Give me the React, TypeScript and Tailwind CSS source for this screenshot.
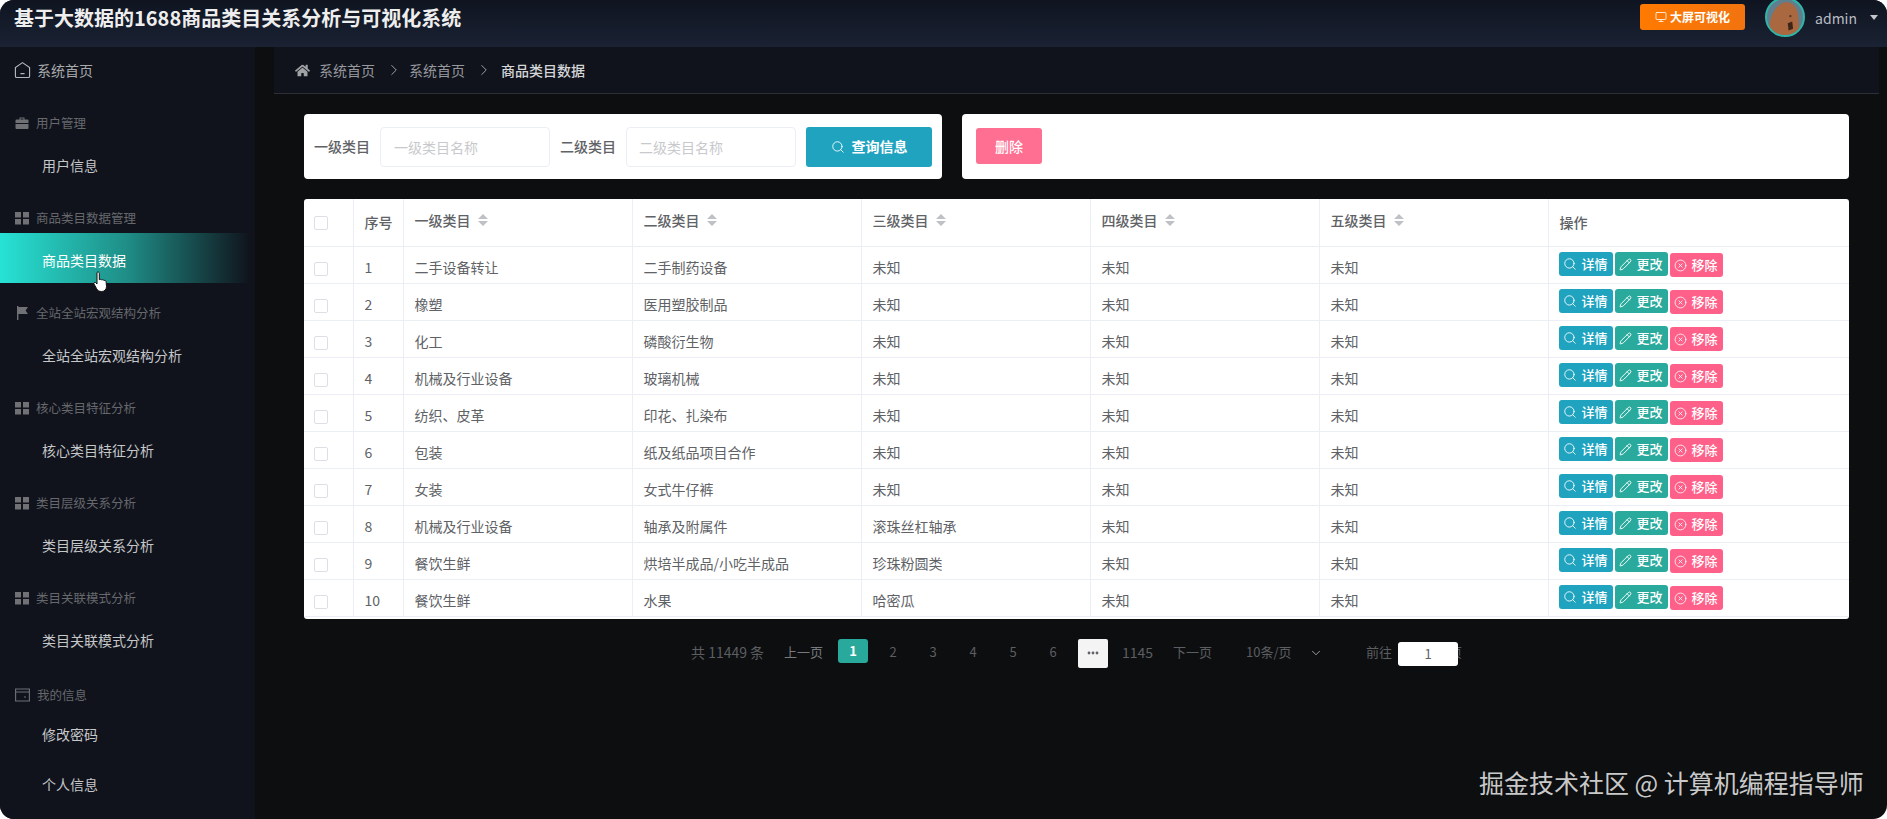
import { ChevronDown, ChevronRight, CircleX, Monitor, Pencil, Search } from "lucide-react";
import { FaHome } from "react-icons/fa";

const sideGroups = [
  { title: "用户管理", icon: "case", items: ["用户信息"] },
  { title: "商品类目数据管理", icon: "grid", items: ["商品类目数据"], active: true },
  { title: "全站全站宏观结构分析", icon: "flag", items: ["全站全站宏观结构分析"] },
  { title: "核心类目特征分析", icon: "grid", items: ["核心类目特征分析"] },
  { title: "类目层级关系分析", icon: "grid", items: ["类目层级关系分析"] },
  { title: "类目关联模式分析", icon: "grid", items: ["类目关联模式分析"] },
];

const rows = [
  ["二手设备转让", "二手制药设备", "未知"],
  ["橡塑", "医用塑胶制品", "未知"],
  ["化工", "磷酸衍生物", "未知"],
  ["机械及行业设备", "玻璃机械", "未知"],
  ["纺织、皮革", "印花、扎染布", "未知"],
  ["包装", "纸及纸品项目合作", "未知"],
  ["女装", "女式牛仔裤", "未知"],
  ["机械及行业设备", "轴承及附属件", "滚珠丝杠轴承"],
  ["餐饮生鲜", "烘培半成品/小吃半成品", "珍珠粉圆类"],
  ["餐饮生鲜", "水果", "哈密瓜"],
];

const GroupIcon = ({ kind }: { kind: string }) => {
  if (kind === "case")
    return (
      <svg viewBox="0 0 14 14" className="h-[14px] w-[14px]" fill="#6f7175">
        <path d="M4.5 1.5h5v2h3a1 1 0 0 1 1 1v2.500H.5V4.500a1 1 0 0 1 1-1h3zM5.500 2.500v1h3v-1zM.5 8h13v4a1 1 0 0 1-1 1h-11a1 1 0 0 1-1-1z" />
      </svg>
    );
  if (kind === "flag")
    return (
      <svg viewBox="0 0 14 14" className="h-[14px] w-[14px]" fill="#6f7175">
        <path d="M2 0h1.400v14H2zM3.400 1H13l-2.400 3.500L13 8H3.400z" />
      </svg>
    );
  return (
    <svg viewBox="0 0 14 14" className="h-[14px] w-[14px]" fill="#6f7175">
      <path d="M0 1h6v5.400H0zM8 1h6v5.400H8zM0 8h6v5.400H0zM8 8h6v5.400H8z" />
    </svg>
  );
};

const SortCaret = () => (
  <svg viewBox="0 0 10 12" className="ml-[7px] inline-block h-[12px] w-[10px]" fill="#bfc1c6">
    <path d="M5 0l5 5H0zM5 12L0 7h10z" />
  </svg>
);

const CheckBox = () => <span className="block h-[14px] w-[14px] rounded-[2px] border border-[#dcdfe6] bg-white" />;

const ActionButton = ({ className, icon, label }: { className: string; icon: React.ReactNode; label: string }) => (
  <button className={`flex h-[24px] items-center justify-center gap-[4px] rounded-[3px] text-[13px] font-medium text-white ${className}`}>
    {icon}
    {label}
  </button>
);

export default function App() {
  return (
    <div className="relative h-[819px] w-[1887px] overflow-hidden rounded-[14px] bg-[#0d0e10] font-['Noto_Sans_CJK_SC','Noto_Sans',sans-serif]">
      {/* top bar */}
      <header className="flex h-[47px] items-start justify-between bg-gradient-to-b from-[#0f1420] to-[#1a2233] pl-[14px] pr-[9px]">
        <h1 className="mt-[4px] text-[20px] font-bold leading-[28px] text-[#eeeeee]">基于大数据的1688商品类目关系分析与可视化系统</h1>
        <div className="flex items-start">
          <button className="mt-[4px] flex h-[26px] w-[105px] items-center justify-center gap-[3px] rounded-[3px] bg-gradient-to-r from-[#ff7a00] to-[#f2730f] text-[12px] font-bold text-white">
            <Monitor size={12} strokeWidth={1.6} />
            大屏可视化
          </button>
          <div className="relative ml-[20px] mt-[-3px] h-[40px] w-[40px] overflow-hidden rounded-full border-2 border-[#2fb5a8] bg-[#5f7f8f]">
            <svg viewBox="0 0 40 40" className="h-full w-full">
              <path d="M3 40C1 26 6 8 19 4c11-2 16 8 16 18 0 8 2 14 0 18z" fill="#a9683f" />
              <path d="M23 27l5-2 1 8-5 2z" fill="#3f241a" />
              <circle cx="26" cy="19" r="1.300" fill="#5a3424" />
            </svg>
          </div>
          <span className="ml-[10px] mt-[6px] text-[14px] leading-[24px] text-[#b9bdc4]">admin</span>
          <span className="ml-[13px] mt-[15px] h-0 w-0 border-x-[4px] border-t-[5px] border-x-transparent border-t-[#c4c7cc]" />
        </div>
      </header>

      <div className="flex h-[772px]">
        {/* side menu */}
        <aside className="w-[255px] shrink-0 bg-[#10131c]">
          <div className="flex h-[46px] items-center gap-[6px] pl-[14px] text-[14px] text-[#a8a9ab]">
            <svg viewBox="0 0 18 18" className="h-[18px] w-[17px]" fill="none" stroke="#b4b5b8" strokeWidth="1.2">
              <path d="M9 1.200l7.500 5.300v9a1.400 1.400 0 0 1-1.400 1.400H2.900a1.400 1.400 0 0 1-1.400-1.400v-9zM6.800 12.800h4.400" />
            </svg>
            系统首页
          </div>
          <div className="mt-[15px]">
            {sideGroups.map((group) => (
              <div key={group.title} className="mb-[15px]">
                <div className="flex h-[30px] items-center gap-[7px] pl-[15px] text-[12.500px] text-[#66686c]">
                  <GroupIcon kind={group.icon} />
                  {group.title}
                </div>
                {group.items.map((item) => (
                  <div
                    key={item}
                    className={`flex h-[50px] w-[250px] items-center pl-[42px] pt-[4px] text-[14px] ${
                      group.active ? "bg-gradient-to-r from-[#26e3d5] via-[#1f8f88] to-transparent text-white" : "text-[#c6c7c9]"
                    }`}
                  >
                    {item}
                  </div>
                ))}
              </div>
            ))}
            <div className="mt-[17px] flex h-[30px] items-center gap-[7px] pl-[15px] text-[12.500px] text-[#66686c]">
              <svg viewBox="0 0 15 14" className="h-[14px] w-[15px]" fill="none" stroke="#6f7175" strokeWidth="1.100">
                <path d="M.6 1h13.800v12H.6zM.6 4h13.800M9 9h2" />
              </svg>
              我的信息
            </div>
            <div className="mt-[-1px] flex h-[50px] items-center pl-[42px] text-[14px] text-[#c6c7c9]">修改密码</div>
            <div className="flex h-[50px] items-center pl-[42px] text-[14px] text-[#c6c7c9]">个人信息</div>
          </div>
        </aside>

        <main className="min-w-0 flex-1">
          {/* breadcrumb */}
          <nav className="ml-[19px] mr-[8px] flex h-[47px] items-center border-b border-[#2c2f36] bg-[#10131c] pl-[21px] text-[14px] text-[#96989c]">
            <FaHome size={15} color="#a0a2a6" />
            <span className="ml-[9px]">系统首页</span>
            <ChevronRight size={18} strokeWidth={1.300} className="ml-[10px] mr-[6px] text-[#a0a2a6]" />
            <span>系统首页</span>
            <ChevronRight size={18} strokeWidth={1.300} className="ml-[10px] mr-[8px] text-[#a0a2a6]" />
            <span className="font-medium text-[#d5d6d8]">商品类目数据</span>
          </nav>

          <div className="pl-[49px] pr-[38px] pt-[20px]">
            {/* search + actions */}
            <div className="flex gap-[20px]">
              <div className="flex h-[65px] w-[638px] items-center rounded-[4px] bg-white pl-[10px] text-[14px] text-[#606266]">
                <span className="font-medium">一级类目</span>
                <input className="ml-[10px] h-[40px] w-[170px] rounded-[4px] border border-[#ebeef5] px-[13px] outline-none placeholder:text-[#c8c9cc]" placeholder="一级类目名称" />
                <span className="ml-[10px] font-medium">二级类目</span>
                <input className="ml-[10px] h-[40px] w-[170px] rounded-[4px] border border-[#ebeef5] px-[12px] outline-none placeholder:text-[#c8c9cc]" placeholder="二级类目名称" />
                <button className="ml-[10px] flex h-[40px] w-[126px] items-center justify-center gap-[7px] rounded-[3px] bg-[#20a3bf] font-bold text-white">
                  <Search size={14} strokeWidth={1.500} />
                  查询信息
                </button>
              </div>
              <div className="flex h-[65px] flex-1 items-center rounded-[4px] bg-white pl-[14px]">
                <button className="mt-[-1px] h-[36px] w-[66px] rounded-[3px] bg-[#ff6f91] text-[14px] font-medium text-white">删除</button>
              </div>
            </div>

            {/* table */}
            <div className="mt-[20px] overflow-hidden rounded-[3px] bg-white pb-[2px]">
              <table className="w-[1545px] table-fixed border-collapse text-[14px] text-[#606266]">
                <colgroup>
                  <col className="w-[49px]" />
                  <col className="w-[50px]" />
                  <col className="w-[229px]" />
                  <col className="w-[229px]" />
                  <col className="w-[229px]" />
                  <col className="w-[229px]" />
                  <col className="w-[229px]" />
                  <col />
                </colgroup>
                <thead>
                  <tr className="h-[47px] border-b border-[#ebeef5] text-left font-medium">
                    <th className="pl-[10px] pt-[2px]"><CheckBox /></th>
                    <th className="border-l border-[#ebeef5] pl-[11px] font-medium">序号</th>
                    {["一级类目", "二级类目", "三级类目", "四级类目", "五级类目"].map((h) => (
                      <th key={h} className="border-l border-[#ebeef5] pl-[11px] pb-[4px] font-medium">
                        <span className="flex items-center">{h}<SortCaret /></span>
                      </th>
                    ))}
                    <th className="border-l border-[#ebeef5] pl-[11px] font-medium">操作</th>
                  </tr>
                </thead>
                <tbody>
                  {rows.map((r, i) => (
                    <tr key={i} className="h-[37px] border-b border-[#ebeef5]">
                      <td className="pl-[10px] pt-[8px]"><CheckBox /></td>
                      <td className="border-l border-[#ebeef5] pl-[11px] pt-[6px]">{i + 1}</td>
                      <td className="border-l border-[#ebeef5] pl-[11px] pt-[6px]">{r[0]}</td>
                      <td className="border-l border-[#ebeef5] pl-[11px] pt-[6px]">{r[1]}</td>
                      <td className="border-l border-[#ebeef5] pl-[11px] pt-[6px]">{r[2]}</td>
                      <td className="border-l border-[#ebeef5] pl-[11px] pt-[6px]">未知</td>
                      <td className="border-l border-[#ebeef5] pl-[11px] pt-[6px]">未知</td>
                      <td className="border-l border-[#ebeef5] pl-[10px]">
                        <div className="flex gap-[2px]">
                          <ActionButton className="w-[54px] bg-[#20a3bf]" icon={<Search size={14} strokeWidth={1.500} />} label="详情" />
                          <ActionButton className="w-[53px] bg-[#2aaa9c]" icon={<Pencil size={13} strokeWidth={1.700} />} label="更改" />
                          <ActionButton className="mt-[1px] w-[53px] bg-[#ff6089]" icon={<CircleX size={13} strokeWidth={1.500} />} label="移除" />
                        </div>
                      </td>
                    </tr>
                  ))}
                </tbody>
              </table>
            </div>

            {/* pagination */}
            <div className="mt-[20px] flex h-[28px] items-start pl-[387px] text-[13px] leading-[26px] text-[#5c5e62]">
              <span className="w-[73px] whitespace-nowrap text-[14px]">共 11449 条</span>
              <span className="ml-[20px] w-[40px] text-[#77797d]">上一页</span>
              <span className="ml-[14px] flex h-[24px] w-[30px] items-center justify-center rounded-[3px] bg-[#28a99c] font-bold text-white">1</span>
              {[2, 3, 4, 5, 6].map((n) => (
                <span key={n} className="ml-[10px] w-[30px] text-center">{n}</span>
              ))}
              <span className="ml-[10px] flex h-[29px] w-[30px] items-center justify-center rounded-[2px] bg-[#f4f4f5]">
                <svg viewBox="0 0 12 4" className="h-[4px] w-[12px]" fill="#606266">
                  <circle cx="2" cy="2" r="1.400" />
                  <circle cx="6" cy="2" r="1.400" />
                  <circle cx="10" cy="2" r="1.400" />
                </svg>
              </span>
              <span className="ml-[14px] w-[32px] text-[14px]">1145</span>
              <span className="ml-[19px] w-[40px]">下一页</span>
              <span className="ml-[33px] w-[47px] whitespace-nowrap">10条/页</span>
              <ChevronDown size={14} strokeWidth={1.500} className="ml-[16px] mt-[7px] text-[#b0b0b0]" />
              <span className="ml-[43px] w-[28px]">前往</span>
              <input readOnly value="1" className="relative z-10 ml-[4px] mt-[3px] h-[24px] w-[60px] rounded-[3px] bg-white text-center text-[13px] text-[#606266] outline-none" />
              <span className="ml-[-9px]">页</span>
            </div>
          </div>
        </main>
      </div>

      {/* pointer over the active menu item */}
      <svg viewBox="0 0 16 22" className="absolute left-[93px] top-[271px] h-[22px] w-[16px]" fill="#fff" stroke="#111" strokeWidth="1">
        <path d="M4 1.500c1-1 2.300-.4 2.300 1v6.200c.8-.6 2-.5 2.400.3.8-.5 1.900-.3 2.300.5.8-.3 1.900.1 2.100 1l.4 5c0 3-2 5-5 5-2.500 0-3.800-1-5-3L1 13c-.6-1 .6-2.200 1.600-1.400L4 13z" />
      </svg>

      <div className="absolute left-[1479px] top-[763px] text-[25px] leading-[38px] text-[#c9c9c9]">掘金技术社区 @ 计算机编程指导师</div>
    </div>
  );
}
